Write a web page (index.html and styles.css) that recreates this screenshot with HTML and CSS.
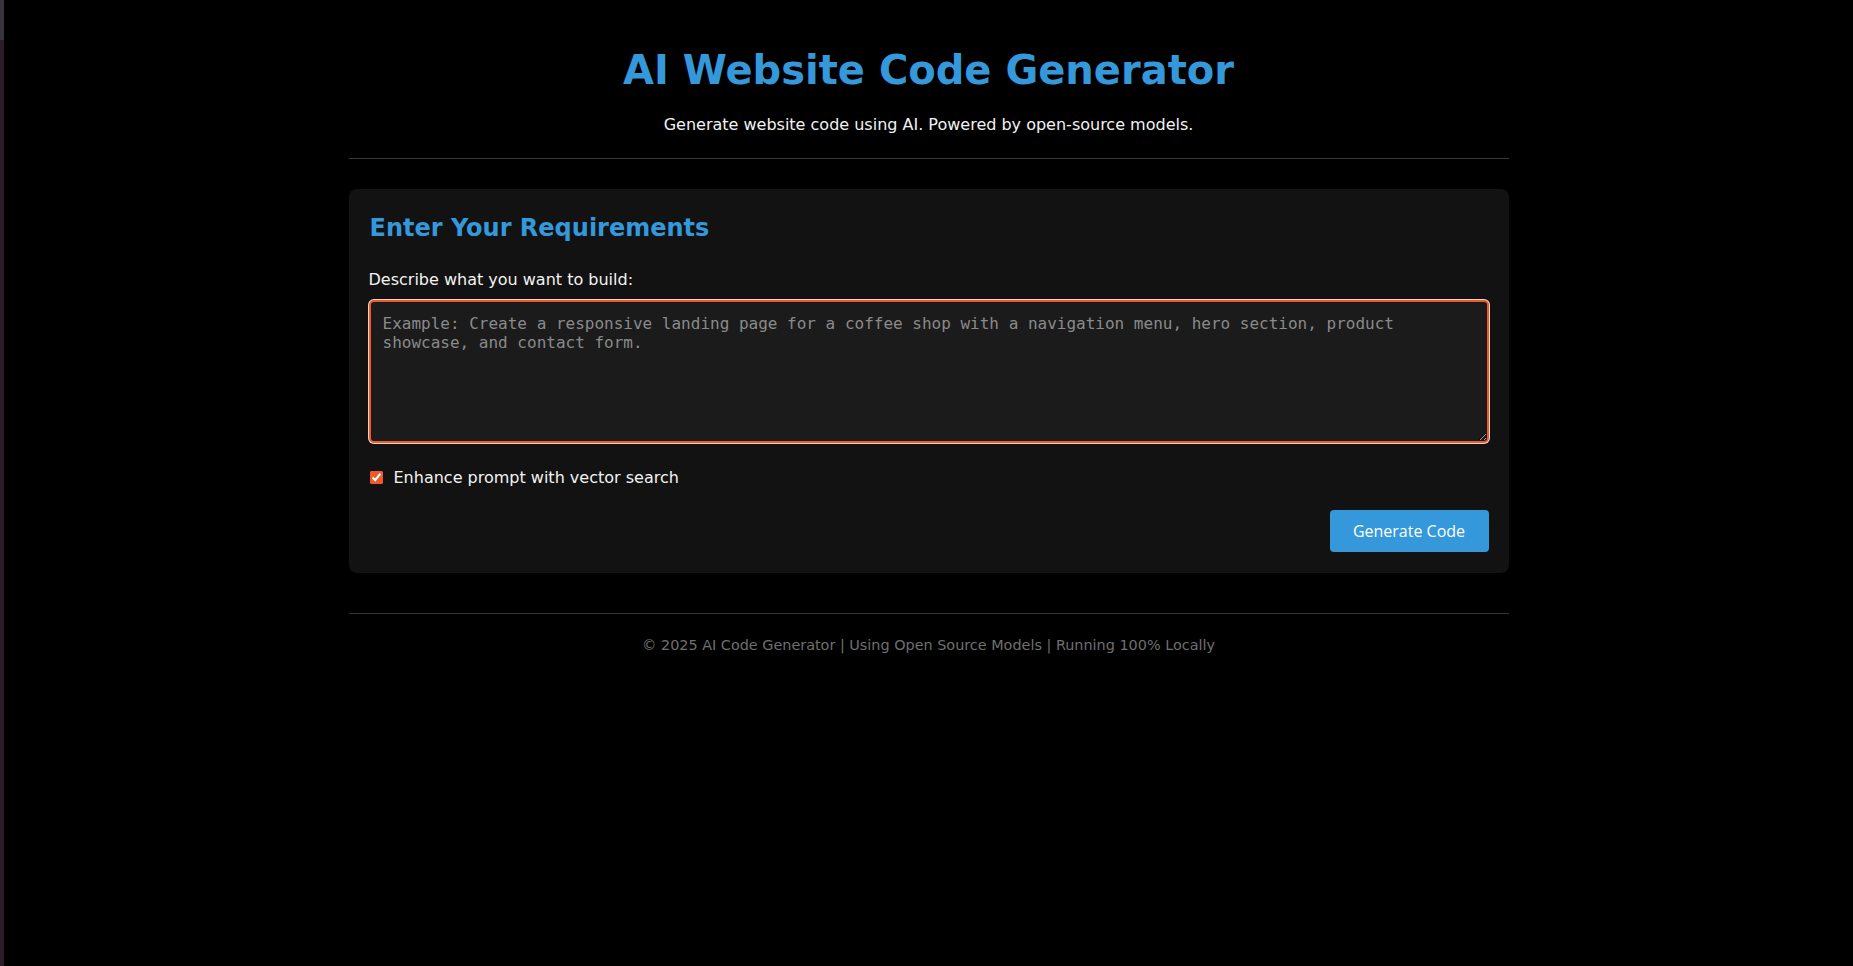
FILE: index.html
```html
<!DOCTYPE html>
<html lang="en">
<head>
<meta charset="utf-8">
<title>AI Website Code Generator</title>
<link rel="stylesheet" href="styles.css">
</head>
<body>
<div class="edge"></div>
<main class="page">
  <div class="container">
    <header class="header">
      <h1 class="title">AI Website Code Generator</h1>
      <p class="subtitle">Generate website code using AI. Powered by open-source models.</p>
    </header>
    <section class="card">
      <h2 class="card-title">Enter Your Requirements</h2>
      <label class="field-label" for="prompt">Describe what you want to build:</label>
      <textarea id="prompt" class="prompt" placeholder="Example: Create a responsive landing page for a coffee shop with a navigation menu, hero section, product showcase, and contact form."></textarea>
      <label class="check-row">
        <input type="checkbox" class="check" checked>
        <span>Enhance prompt with vector search</span>
      </label>
      <div class="actions">
        <button class="btn" type="button">Generate Code</button>
      </div>
    </section>
    <footer class="footer">© 2025 AI Code Generator | Using Open Source Models | Running 100% Locally</footer>
  </div>
</main>
</body>
</html>
```
FILE: styles.css
```css
html, body {
  margin: 0;
  padding: 0;
  height: 100%;
  background: #000;
}
body {
  display: flex;
  font-family: "DejaVu Sans", sans-serif;
  color: #f0f0f0;
}
.edge {
  width: 4px;
  flex: none;
  background: linear-gradient(#3a343c 0 40px, #2a1d27 40px);
}
.page {
  flex: 1;
  min-width: 0;
}
.container {
  max-width: 1160px;
  margin: 0 auto;
  padding-top: 47px;
}
.header {
  text-align: center;
  padding-bottom: 24px;
  border-bottom: 1px solid #3a3a3a;
}
.title {
  margin: 0;
  font-size: 40px;
  font-weight: bold;
  line-height: normal;
  color: #3498db;
}
.subtitle {
  margin: 22px 0 0;
  font-size: 16px;
  line-height: normal;
  color: #f2f2f2;
}
.card {
  margin-top: 30px;
  background: #121212;
  border-radius: 8px;
  padding: 20px 20px 21px;
  display: flex;
  flex-direction: column;
}
.card-title {
  margin: 5px 0 28px 1px;
  font-size: 24px;
  font-weight: bold;
  line-height: normal;
  color: #3498db;
}
.field-label {
  font-size: 16px;
  line-height: normal;
  color: #f2f2f2;
  margin-bottom: 11px;
}
.prompt {
  box-sizing: border-box;
  width: 100%;
  height: 143px;
  background: #1b1b1b;
  border: 2px solid #ef5a28;
  border-radius: 5px;
  box-shadow: 0 0 0 1px #e8d8d0;
  padding: 12px;
  font-family: "DejaVu Sans Mono", monospace;
  font-size: 16px;
  line-height: normal;
  color: #ddd;
  outline: none;
  resize: vertical;
}
.prompt::placeholder {
  color: #8a8a8a;
}
.check-row {
  margin-top: 25px;
  display: flex;
  align-items: center;
  gap: 11px;
  font-size: 16px;
  line-height: normal;
  color: #f2f2f2;
}
.check {
  width: 13px;
  height: 13px;
  margin: 0 0 0 1px;
  accent-color: #f0592a;
}
.actions {
  margin-top: 23px;
  display: flex;
  justify-content: flex-end;
}
.btn {
  height: 42px;
  width: 159px;
  background: #3498db;
  color: #fff;
  border: none;
  border-radius: 4px;
  font-family: "Open Sans", sans-serif;
  font-size: 16px;
  font-weight: 500;
  padding: 0;
}
.footer {
  margin-top: 40px;
  border-top: 1px solid #333;
  padding-top: 23px;
  text-align: center;
  font-size: 14.4px;
  line-height: normal;
  color: #6f6f6f;
}
```
